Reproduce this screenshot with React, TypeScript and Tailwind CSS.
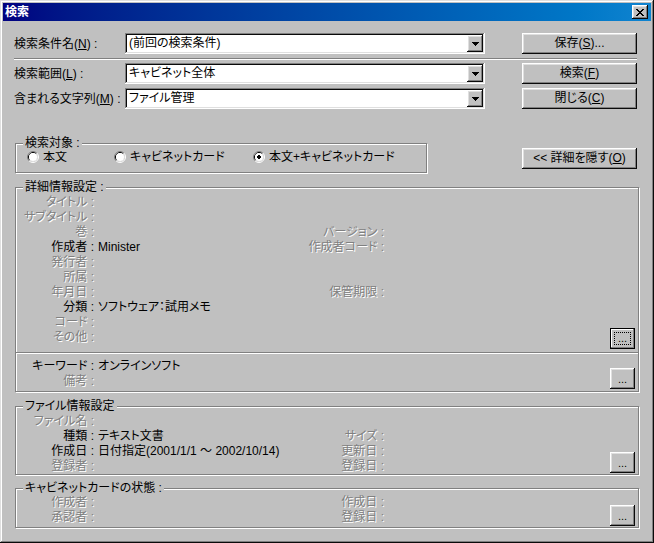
import React from "react";

const FONT = "[font-family:'Liberation_Sans','Noto_Sans_CJK_JP',sans-serif] [font-feature-settings:'palt']";
const WIN = "shadow-[inset_-1px_-1px_#0a0a0a,inset_1px_1px_#dfdfdf,inset_-2px_-2px_#808080,inset_2px_2px_#ffffff]";
const RAISED = "shadow-[inset_-1px_-1px_#0a0a0a,inset_1px_1px_#ffffff,inset_-2px_-2px_#808080,inset_2px_2px_#dfdfdf]";
const SUNKEN = "shadow-[inset_-1px_-1px_#ffffff,inset_1px_1px_#808080,inset_-2px_-2px_#dfdfdf,inset_2px_2px_#0a0a0a]";
const ETCHED = "border border-[#808080] shadow-[inset_1px_1px_#ffffff,1px_1px_#ffffff]";
const DISABLED = "text-[#808080] [text-shadow:1px_1px_0_#ffffff]";

type Row = { l: string; v?: string; r?: string };

// 詳細情報設定
const DETAIL_ROWS: Row[] = [
    { l: "タイトル" },
    { l: "サブタイトル" },
    { l: "巻", r: "バージョン" },
    { l: "作成者", v: "Minister", r: "作成者コード" },
    { l: "発行者" },
    { l: "所属" },
    { l: "年月日", r: "保管期限" },
    { l: "分類", v: "ソフトウェア：試用メモ" },
    { l: "コード" },
    { l: "その他" },
];

const KEYWORD_ROWS: Row[] = [{ l: "キーワード", v: "オンラインソフト" }, { l: "備考" }];

const FILE_ROWS: Row[] = [
    { l: "ファイル名" },
    { l: "種類", v: "テキスト文書", r: "サイズ" },
    { l: "作成日", v: "日付指定(2001/1/1 ～ 2002/10/14)", r: "更新日" },
    { l: "登録者", r: "登録日" },
];

const CABINET_ROWS: Row[] = [
    { l: "作成者", r: "作成日" },
    { l: "承認者", r: "登録日" },
];

function Button({ children, className = "" }: { children: React.ReactNode; className?: string }) {
    return (
        <div className={`${RAISED} bg-[#c0c0c0] flex items-center justify-center leading-[15px] ${className}`}>
            {children}
        </div>
    );
}

function Combo({ value }: { value: string }) {
    return (
        <div className={`${SUNKEN} w-[360px] h-[21px] bg-white p-[2px] flex`}>
            <div className="flex-1 pl-[2px] leading-[17px] whitespace-nowrap">{value}</div>
            <div className={`${RAISED} w-[16px] h-full bg-[#c0c0c0] flex items-center justify-center`}>
                <svg width="7" height="4" viewBox="0 0 7 4" shapeRendering="crispEdges">
                    <rect x="0" y="0" width="7" height="1" fill="#000" />
                    <rect x="1" y="1" width="5" height="1" fill="#000" />
                    <rect x="2" y="2" width="3" height="1" fill="#000" />
                    <rect x="3" y="3" width="1" height="1" fill="#000" />
                </svg>
            </div>
        </div>
    );
}

function GroupBox({ label, className = "", children }: { label: string; className?: string; children?: React.ReactNode }) {
    return (
        <div className={`relative ${ETCHED} ${className}`}>
            <span className="absolute -top-[8px] left-[7px] px-[2px] bg-[#c0c0c0] leading-[15px] whitespace-nowrap">
                {label}
            </span>
            {children}
        </div>
    );
}

function Radio({ checked, label, className = "" }: { checked?: boolean; label: string; className?: string }) {
    return (
        <div className={`flex items-center gap-[4px] ${className}`}>
            <svg width="12" height="12" viewBox="0 0 12 12">
                <path d="M 9.89 2.11 A 5.5 5.5 0 0 0 2.11 9.89" stroke="#808080" fill="none" />
                <path d="M 2.11 9.89 A 5.5 5.5 0 0 0 9.89 2.11" stroke="#ffffff" fill="none" />
                <path d="M 9.18 2.82 A 4.5 4.5 0 0 0 2.82 9.18" stroke="#0a0a0a" fill="none" />
                <path d="M 2.82 9.18 A 4.5 4.5 0 0 0 9.18 2.82" stroke="#dfdfdf" fill="none" />
                <circle cx="6" cy="6" r="4" fill="#ffffff" />
                {checked && (
                    <g shapeRendering="crispEdges" fill="#000">
                        <rect x="5" y="4" width="2" height="1" />
                        <rect x="4" y="5" width="4" height="2" />
                        <rect x="5" y="7" width="2" height="1" />
                    </g>
                )}
            </svg>
            <span className="leading-[12px] whitespace-nowrap">{label}</span>
        </div>
    );
}

function InfoRows({ rows }: { rows: Row[] }) {
    return (
        <div className="flex flex-col">
            {rows.map((row, i) => (
                <div key={i} className="grid grid-cols-[78px_194px_96px_1fr] h-[15px] leading-[15px] whitespace-nowrap">
                    <span className={`text-right ${row.v ? "" : DISABLED}`}>{row.l} :</span>
                    <span className="pl-[4px]">{row.v ?? ""}</span>
                    <span className={`text-right ${DISABLED}`}>{row.r ? `${row.r} :` : ""}</span>
                    <span />
                </div>
            ))}
        </div>
    );
}

function DotsButton({ className = "" }: { className?: string }) {
    return (
        <Button className={`w-[25px] h-[21px] ${className}`}>
            <span className="text-[11px] leading-[11px] pt-[2px]">...</span>
        </Button>
    );
}

function TitleBar() {
    return (
        <div className="h-[18px] bg-gradient-to-r from-[#000080] to-[#1084d0] flex items-center justify-between">
            <span className="pl-[2px] text-white font-bold leading-[18px]">検索</span>
            <div className={`${RAISED} bg-[#c0c0c0] w-[16px] h-[14px] mr-[3px] flex items-center justify-center`}>
                <svg width="8" height="7" viewBox="0 0 8 7" shapeRendering="crispEdges" fill="#000">
                    <rect x="0" y="0" width="2" height="1" />
                    <rect x="6" y="0" width="2" height="1" />
                    <rect x="1" y="1" width="2" height="1" />
                    <rect x="5" y="1" width="2" height="1" />
                    <rect x="2" y="2" width="4" height="1" />
                    <rect x="3" y="3" width="2" height="1" />
                    <rect x="2" y="4" width="4" height="1" />
                    <rect x="1" y="5" width="2" height="1" />
                    <rect x="5" y="5" width="2" height="1" />
                    <rect x="0" y="6" width="2" height="1" />
                    <rect x="6" y="6" width="2" height="1" />
                </svg>
            </div>
        </div>
    );
}

export default function App() {
    return (
        <div className={`w-[654px] h-[543px] bg-[#c0c0c0] p-[3px] text-[12px] text-black ${FONT} ${WIN}`}>
            <TitleBar />

            <div className="pl-[11px]">
                {/* 検索条件 */}
                <div className="mt-[12px] flex items-center h-[21px]">
                    <span className="w-[111px] whitespace-nowrap">検索条件名(<u>N</u>) :</span>
                    <Combo value="(前回の検索条件)" />
                    <Button className="ml-[37px] w-[115px] h-[21px]">保存(<u>S</u>)...</Button>
                </div>

                <div className="mt-[4px] w-[623px] h-[2px] border-t border-b border-t-[#808080] border-b-white" />

                <div className="mt-[3px] flex items-center h-[21px]">
                    <span className="w-[111px] whitespace-nowrap">検索範囲(<u>L</u>) :</span>
                    <Combo value="キャビネット全体" />
                    <Button className="ml-[37px] w-[115px] h-[21px]">検索(<u>F</u>)</Button>
                </div>

                <div className="mt-[4px] flex items-center h-[21px]">
                    <span className="w-[111px] whitespace-nowrap">含まれる文字列(<u>M</u>) :</span>
                    <Combo value="ファイル管理" />
                    <Button className="ml-[37px] w-[115px] h-[21px]">閉じる(<u>C</u>)</Button>
                </div>

                {/* 検索対象 */}
                <div className="mt-[34px] ml-[1px] flex items-start">
                    <GroupBox label="検索対象 :" className="w-[412px] h-[30px]">
                        <div className="flex pt-[7px] pl-[11px]">
                            <Radio label="本文" className="w-[87px]" />
                            <Radio label="キャビネットカード" className="w-[139px]" />
                            <Radio label="本文+キャビネットカード" checked />
                        </div>
                    </GroupBox>
                    <Button className="ml-[95px] mt-[5px] w-[115px] h-[21px]">
                        &lt;&lt; 詳細を隠す(<u>O</u>)
                    </Button>
                </div>

                {/* 詳細情報設定 */}
                <GroupBox label="詳細情報設定 :" className="mt-[14px] ml-[1px] w-[624px] h-[205px] flex flex-col">
                    <div className="h-[164px] flex items-end justify-between">
                        <div className="self-start pt-[7px]">
                            <InfoRows rows={DETAIL_ROWS} />
                        </div>
                        <div className="w-[25px] h-[21px] mr-[3px] mb-[3px] border border-black bg-[#c0c0c0]">
                            <div className="w-full h-full p-[1px] shadow-[inset_-1px_-1px_#808080,inset_1px_1px_#ffffff] flex">
                                <div className="flex-1 m-[2px] border border-dotted border-black flex items-end justify-center">
                                    <span className="text-[11px] leading-[11px]">...</span>
                                </div>
                            </div>
                        </div>
                    </div>
                    <div className="w-[622px] h-[2px] border-t border-b border-t-[#808080] border-b-white" />
                    <div className="flex-1 flex items-end justify-between">
                        <div className="self-start pt-[5px]">
                            <InfoRows rows={KEYWORD_ROWS} />
                        </div>
                        <DotsButton className="mr-[3px] mb-[2px]" />
                    </div>
                </GroupBox>

                {/* ファイル情報設定 */}
                <GroupBox label="ファイル情報設定" className="mt-[14px] ml-[1px] w-[624px] h-[69px] flex items-end justify-between">
                    <div className="self-start pt-[7px]">
                        <InfoRows rows={FILE_ROWS} />
                    </div>
                    <DotsButton className="mr-[3px] mb-[1px]" />
                </GroupBox>

                {/* キャビネットカードの状態 */}
                <GroupBox label="キャビネットカードの状態 :" className="mt-[13px] ml-[1px] w-[624px] h-[40px] flex items-end justify-between">
                    <div className="self-start pt-[6px]">
                        <InfoRows rows={CABINET_ROWS} />
                    </div>
                    <DotsButton className="mr-[3px] mb-[1px]" />
                </GroupBox>
            </div>
        </div>
    );
}
